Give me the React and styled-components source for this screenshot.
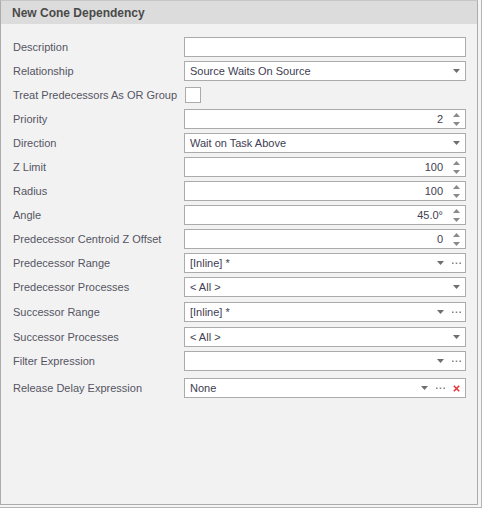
import React from 'react'
import styled, { createGlobalStyle } from 'styled-components'

const GlobalStyle = createGlobalStyle`
  html, body {
    margin: 0;
    padding: 0;
    background: #ffffff;
  }
  body {
    font-family: "Segoe UI", "Liberation Sans", Arial, sans-serif;
    font-size: 11px;
  }
`

const Frame = styled.div`
  width: 481px;
  height: 507px;
  border-right: 1px solid #b4b4b4;
  border-bottom: 1px solid #b4b4b4;
  background: #f4f4f4;
`

const Panel = styled.div`
  box-sizing: border-box;
  width: 478px;
  height: 505px;
  border: 1px solid #acacac;
  border-top-color: #c6c6c6;
  background: #f2f2f2;
  display: flex;
  flex-direction: column;
`

const Header = styled.div`
  height: 23px;
  flex: none;
  background: #dcdcdc;
  display: flex;
  align-items: center;
  padding-left: 11px;
  font-weight: bold;
  font-size: 12px;
  color: #4a4a4a;
`

const Form = styled.div`
  display: grid;
  grid-template-columns: 171px 282px;
  row-gap: 4px;
  padding: 13px 0 0 12px;
`

const Label = styled.div`
  height: 20px;
  display: flex;
  align-items: center;
  color: #555563;
  white-space: nowrap;
  margin-top: ${p => p.$offset || 0}px;
`

const Editor = styled.div`
  box-sizing: border-box;
  height: 20px;
  border: 1px solid #ababab;
  background: #ffffff;
  display: flex;
  align-items: stretch;
  margin-top: ${p => p.$offset || 0}px;
`

const Value = styled.div`
  flex: 1;
  display: flex;
  align-items: center;
  justify-content: ${p => (p.$right ? 'flex-end' : 'flex-start')};
  padding: 0 5px 0 5px;
  color: #404052;
  white-space: nowrap;
  overflow: hidden;
`

const Button = styled.div`
  width: 16px;
  flex: none;
  display: flex;
  flex-direction: column;
  align-items: center;
  justify-content: center;
  gap: ${p => p.$gap || 0}px;
`

const Tail = styled.div`
  width: 1px;
  flex: none;
`

const CheckCell = styled.div`
  height: 20px;
  display: flex;
  align-items: center;
  padding-left: 1px;
`

const CheckBox = styled.div`
  box-sizing: border-box;
  width: 16px;
  height: 16px;
  border: 1px solid #ababab;
  background: #ffffff;
`

const DropArrow = () => (
  <svg width="7" height="4" viewBox="0 0 7 4">
    <polygon points="0,0 7,0 3.5,4" fill="#6e6e6e" />
  </svg>
)

const Ellipsis = () => (
  <svg width="9" height="2" viewBox="0 0 9 2">
    <rect x="0" y="0.5" width="1.6" height="1.5" fill="#858585" />
    <rect x="3.7" y="0.5" width="1.6" height="1.5" fill="#858585" />
    <rect x="7.4" y="0.5" width="1.6" height="1.5" fill="#858585" />
  </svg>
)

const Clear = () => (
  <svg width="7" height="7" viewBox="0 0 7 7">
    <path d="M0.8 0.8 L6.2 6.2 M6.2 0.8 L0.8 6.2" stroke="#e2363c" strokeWidth="1.6" />
  </svg>
)

const Spin = () => (
  <Button $gap={5}>
    <svg width="7" height="4" viewBox="0 0 7 4">
      <polygon points="0,4 7,4 3.5,0" fill="#8a8a8a" />
    </svg>
    <svg width="7" height="4" viewBox="0 0 7 4">
      <polygon points="0,0 7,0 3.5,4" fill="#8a8a8a" />
    </svg>
  </Button>
)

const Field = ({ value, right, buttons = [], offset }) => (
  <Editor $offset={offset}>
    <Value $right={right}>{value}</Value>
    {buttons.map((b, i) => {
      if (b === 'spin') return <Spin key={i} />
      return (
        <Button key={i}>
          {b === 'drop' && <DropArrow />}
          {b === 'more' && <Ellipsis />}
          {b === 'clear' && <Clear />}
        </Button>
      )
    })}
    <Tail />
  </Editor>
)

const rows = [
  { label: 'Description', value: '' },
  { label: 'Relationship', value: 'Source Waits On Source', buttons: ['drop'] },
  { label: 'Treat Predecessors As OR Group', check: true },
  { label: 'Priority', value: '2', right: true, buttons: ['spin'] },
  { label: 'Direction', value: 'Wait on Task Above', buttons: ['drop'] },
  { label: 'Z Limit', value: '100', right: true, buttons: ['spin'] },
  { label: 'Radius', value: '100', right: true, buttons: ['spin'] },
  { label: 'Angle', value: '45.0°', right: true, buttons: ['spin'] },
  { label: 'Predecessor Centroid Z Offset', value: '0', right: true, buttons: ['spin'] },
  { label: 'Predecessor Range', value: '[Inline] *', buttons: ['drop', 'more'] },
  { label: 'Predecessor Processes', value: '< All >', buttons: ['drop'] },
  { label: 'Successor Range', value: '[Inline] *', buttons: ['drop', 'more'], offset: 1 },
  { label: 'Successor Processes', value: '< All >', buttons: ['drop'], offset: 1 },
  { label: 'Filter Expression', value: '', buttons: ['drop', 'more'] },
  { label: 'Release Delay Expression', value: 'None', buttons: ['drop', 'more', 'clear'], offset: 3 },
]

export default function App() {
  return (
    <>
      <GlobalStyle />
      <Frame>
        <Panel>
          <Header>New Cone Dependency</Header>
          <Form>
            {rows.map(r => (
              <React.Fragment key={r.label}>
                <Label $offset={r.offset}>{r.label}</Label>
                {r.check ? (
                  <CheckCell>
                    <CheckBox />
                  </CheckCell>
                ) : (
                  <Field
                    value={r.value}
                    right={r.right}
                    buttons={r.buttons}
                    offset={r.offset}
                  />
                )}
              </React.Fragment>
            ))}
          </Form>
        </Panel>
      </Frame>
    </>
  )
}
